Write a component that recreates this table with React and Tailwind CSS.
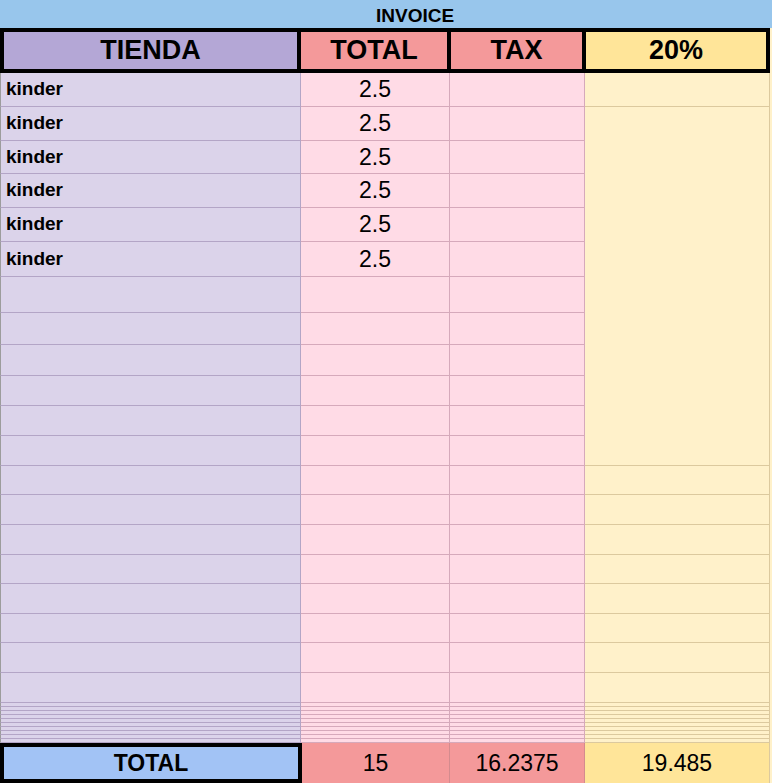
import React from 'react';

// row heights in px (including the 1px bottom gridline)
const topRows = [34, 34, 33, 34, 34, 35, 36, 32, 31, 30, 30, 30];
const lowRows = [29, 30, 30, 29, 30, 29, 30, 30];
const thinRows = [4, 4, 4, 4, 4, 4, 4, 4, 4, 4];

const purple = 'shrink-0 w-[301px] bg-[#dbd3ea] border-l border-r border-b border-[#b3a5c6] border-l-[#9c9c9c]';
const pinkA = 'shrink-0 w-[149px] bg-[#ffdbe6] border-r border-b border-[#d6a9bb]';
const pinkB = 'shrink-0 w-[135px] bg-[#ffdbe6] border-r border-b border-[#d6a9bb]';
const yellow = 'shrink-0 w-[185px] bg-[#fff1ca] border-r border-b border-[#dcc99e]';

const HeaderCell = ({ className, children }) => (
    <div className={`shrink-0 flex items-center justify-center border-y-4 border-r-4 border-black text-[27px] font-bold text-black ${className}`}>
        {children}
    </div>
);

const Cell = ({ h, className, children }) => (
    <div className={`flex items-center ${className}`} style={{ height: h }}>
        {children}
    </div>
);

export default function App() {
    return (
        <div className="w-[772px] h-[783px] overflow-hidden bg-white text-black" style={{ fontFamily: '"Liberation Sans", Arial, sans-serif' }}>
            {/* Banner */}
            <div className="h-[28px] bg-[#98c6ec] flex items-center pl-[376px] pt-[2px]">
                <span className="text-[19px] font-bold leading-none">INVOICE</span>
            </div>

            <div className="flex">
                <div className="w-[770px] flex flex-col">
                    {/* Column headers */}
                    <div className="flex h-[45px]">
                        <HeaderCell className="w-[301px] border-l-4 bg-[#b4a7d6]">TIENDA</HeaderCell>
                        <HeaderCell className="w-[150px] bg-[#f4999a]">TOTAL</HeaderCell>
                        <HeaderCell className="w-[135px] bg-[#f4999a]">TAX</HeaderCell>
                        <HeaderCell className="w-[184px] bg-[#ffe599]">20%</HeaderCell>
                    </div>

                    {/* Rows with merged 20% block */}
                    <div className="flex">
                        <div className="flex flex-col">
                            {topRows.map((h, i) => (
                                <div key={i} className="flex">
                                    <Cell h={h} className={purple}>
                                        {i < 6 && <span className="pl-[5px] text-[19px] font-bold">kinder</span>}
                                    </Cell>
                                    <Cell h={h} className={`${pinkA} justify-center`}>
                                        {i < 6 && <span className="text-[23px]">2.5</span>}
                                    </Cell>
                                    <Cell h={h} className={pinkB} />
                                </div>
                            ))}
                        </div>
                        <div className="flex flex-col">
                            <div className={yellow} style={{ height: topRows[0] }} />
                            <div className={yellow} style={{ height: topRows.slice(1).reduce((a, b) => a + b, 0) }} />
                        </div>
                    </div>

                    {/* Empty rows */}
                    {lowRows.concat(thinRows).map((h, i) => (
                        <div key={i} className="flex">
                            <Cell h={h} className={purple} />
                            <Cell h={h} className={pinkA} />
                            <Cell h={h} className={pinkB} />
                            <Cell h={h} className={yellow} />
                        </div>
                    ))}

                    {/* Totals */}
                    <div className="flex h-[40px]">
                        <div className="shrink-0 w-[302px] flex items-center justify-center border-4 border-black bg-[#a2c3f5] text-[23px] font-bold">
                            TOTAL
                        </div>
                        <div className="shrink-0 w-[148px] flex items-center justify-center border-r border-[#d48b8e] bg-[#f4999a] text-[23px]">
                            15
                        </div>
                        <div className="shrink-0 w-[135px] flex items-center justify-center border-r border-[#d48b8e] bg-[#f4999a] text-[23px]">
                            16.2375
                        </div>
                        <div className="shrink-0 w-[185px] flex items-center justify-center border-r border-[#dcc99e] bg-[#ffe599] text-[23px]">
                            19.485
                        </div>
                    </div>
                </div>
                <div className="w-[2px] bg-[#fff1ca]" />
            </div>
        </div>
    );
}
